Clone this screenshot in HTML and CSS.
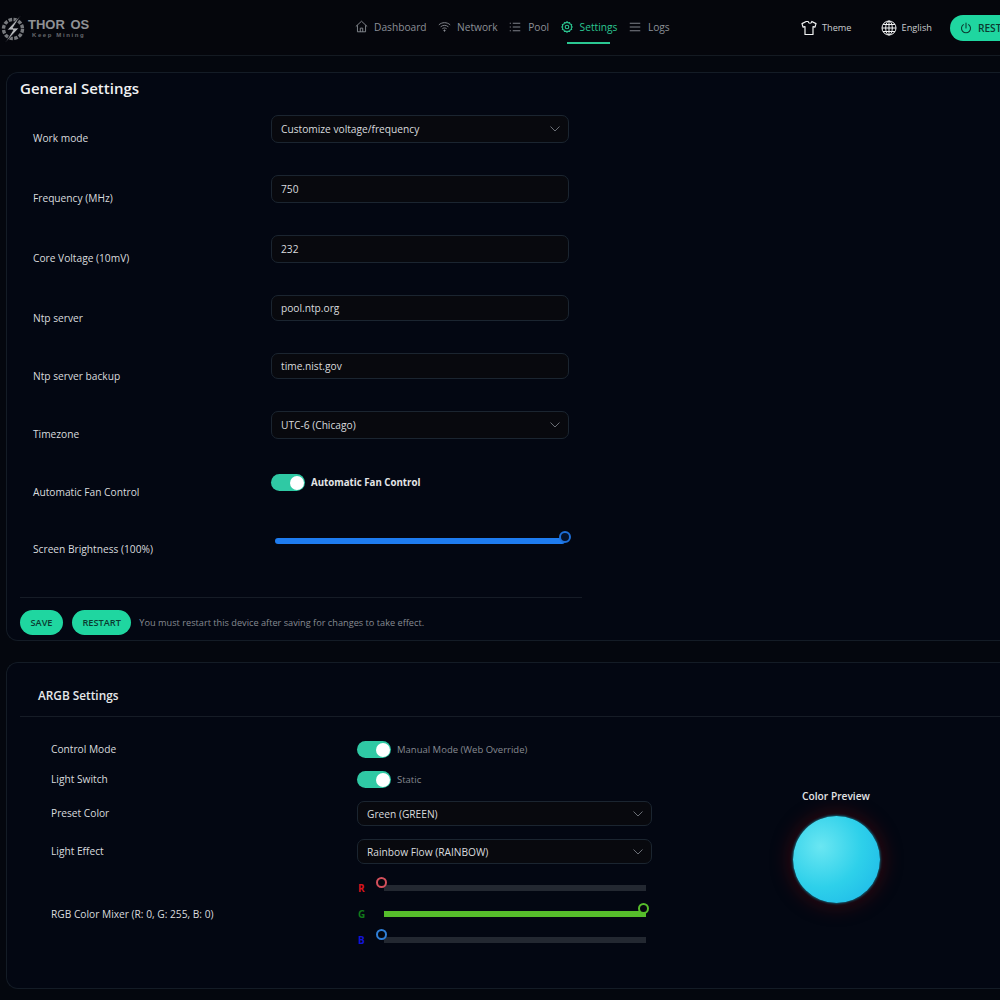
FILE: index.html
```html
<!DOCTYPE html>
<html>
<head>
    <meta charset="utf-8">
    <meta name="viewport" content="width=device-width, initial-scale=1.0">
    <title>Thor OS Settings</title>
    <link rel="stylesheet" href="styles.css">
</head>
<body>
    <header class="topbar">
        <div class="logo">
            <svg class="logo-mark" viewBox="0 0 26 28" width="26" height="28" fill="none">
                <circle cx="13" cy="14" r="9.500" stroke="#77797d" stroke-width="3.400" stroke-dasharray="3.600 1.400"/>
                <path d="M21 0 7 15h6L5 28l14-15h-6z" fill="#b4b6b9" stroke="#05060c" stroke-width=".8"/>
            </svg>
            <div class="logo-text">
                <span class="logo-name">THOR OS</span>
                <span class="logo-sub">Keep Mining</span>
            </div>
        </div>
        <nav class="nav">
            <a class="nav-item">
                <svg viewBox="0 0 16 16" width="13" height="13" fill="none" stroke="currentColor" stroke-width="1.100"><path d="M1 8 8 1.500 15 8M3 6.500V14.500H13V6.500M6.500 14.500V10H9.500V14.500"/></svg>
                Dashboard
            </a>
            <a class="nav-item">
                <svg viewBox="0 0 16 16" width="13" height="13" fill="none" stroke="currentColor" stroke-width="1.100"><path d="M1 6c4-3.600 10-3.600 14 0M3.200 8.400c2.800-2.400 6.800-2.400 9.600 0M5.400 10.700c1.500-1.200 3.700-1.200 5.200 0"/><circle cx="8" cy="13" r=".8" fill="currentColor"/></svg>
                Network
            </a>
            <a class="nav-item wide-gap">
                <svg viewBox="0 0 16 16" width="12" height="12" fill="none" stroke="currentColor" stroke-width="1.200"><path d="M5 3h10M5 8h10M5 13h10M1 3h1.500M1 8h1.500M1 13h1.500"/></svg>
                Pool
            </a>
            <a class="nav-item wide-gap active">
                <svg viewBox="0 0 16 16" width="12" height="12" fill="none" stroke="currentColor" stroke-width="1.500"><path d="M8 1l1.400 1.500 2-.4.7 2 2 .6-.4 2L15 8l-1.300 1.300.4 2-2 .6-.7 2-2-.4L8 15l-1.400-1.500-2 .4-.7-2-2-.6.4-2L1 8l1.300-1.300-.4-2 2-.6.7-2 2 .4z"/><circle cx="8" cy="8" r="2.400"/></svg>
                Settings
            </a>
            <a class="nav-item wide-gap">
                <svg viewBox="0 0 16 16" width="12" height="12" fill="none" stroke="currentColor" stroke-width="1.200"><path d="M1 3h14M1 8h14M1 13h14"/></svg>
                Logs
            </a>
        </nav>
        <div class="top-actions">
            <a class="top-link">
                <svg viewBox="0 0 16 16" width="16" height="16" fill="none" stroke="#f2f3f4" stroke-width="1.200" stroke-linejoin="round"><path d="M5.200 1.500 1 3.600 2 7.200l2-.5v7.800h8V6.700l2 .5 1-3.600-4.200-2.100c-.3 2.300-3.300 2.300-3.600 0z"/></svg>
                Theme
            </a>
            <a class="top-link">
                <svg viewBox="0 0 16 16" width="16" height="16" fill="none" stroke="#f2f3f4" stroke-width="1"><circle cx="8" cy="8" r="7"/><ellipse cx="8" cy="8" rx="3.300" ry="7"/><path d="M8 1v14M1 8h14M2 4.500h12M2 11.500h12"/></svg>
                English
            </a>
            <button class="restart-top">
                <svg viewBox="0 0 16 16" width="12" height="12" fill="none" stroke="currentColor" stroke-width="1.400" stroke-linecap="round"><path d="M8 1.500V8M4.500 3.500a6 6 0 1 0 7 0"/></svg>
                RESTART
            </button>
        </div>
    </header>

    <section class="card general">
        <h2>General Settings</h2>
        <div class="form">
            <div class="form-row">
                <label>Work mode</label>
                <div class="select">Customize voltage/frequency<svg class="chev" viewBox="0 0 10 6" width="10" height="6"><path d="M.5.500 5 5 9.500.500"/></svg></div>
            </div>
            <div class="form-row">
                <label>Frequency (MHz)</label>
                <div class="input">750</div>
            </div>
            <div class="form-row">
                <label>Core Voltage (10mV)</label>
                <div class="input">232</div>
            </div>
            <div class="form-row">
                <label>Ntp server</label>
                <div class="input short">pool.ntp.org</div>
            </div>
            <div class="form-row">
                <label>Ntp server backup</label>
                <div class="input short">time.nist.gov</div>
            </div>
            <div class="form-row">
                <label>Timezone</label>
                <div class="select">UTC-6 (Chicago)<svg class="chev" viewBox="0 0 10 6" width="10" height="6"><path d="M.5.500 5 5 9.500.500"/></svg></div>
            </div>
            <div class="form-row fan-row">
                <label>Automatic Fan Control</label>
                <div class="toggle-wrap">
                    <span class="toggle"></span>
                    <strong>Automatic Fan Control</strong>
                </div>
            </div>
            <div class="form-row brightness-row">
                <label>Screen Brightness (100%)</label>
                <div class="slider blue">
                    <span class="thumb"></span>
                </div>
            </div>
        </div>
        <div class="actions">
            <button class="btn">SAVE</button>
            <button class="btn">RESTART</button>
            <span class="note">You must restart this device after saving for changes to take effect.</span>
        </div>
    </section>

    <section class="card argb">
        <h3>ARGB Settings</h3>
        <div class="argb-body">
            <div class="argb-form">
                <div class="argb-row">
                    <label>Control Mode</label>
                    <div class="toggle-wrap">
                        <span class="toggle"></span>
                        <span class="toggle-text">Manual Mode (Web Override)</span>
                    </div>
                </div>
                <div class="argb-row">
                    <label>Light Switch</label>
                    <div class="toggle-wrap">
                        <span class="toggle"></span>
                        <span class="toggle-text">Static</span>
                    </div>
                </div>
                <div class="argb-row">
                    <label>Preset Color</label>
                    <div class="select small">Green (GREEN)<svg class="chev" viewBox="0 0 10 6" width="10" height="6"><path d="M.5.500 5 5 9.500.500"/></svg></div>
                </div>
                <div class="argb-row">
                    <label>Light Effect</label>
                    <div class="select small">Rainbow Flow (RAINBOW)<svg class="chev" viewBox="0 0 10 6" width="10" height="6"><path d="M.5.500 5 5 9.500.500"/></svg></div>
                </div>
                <div class="argb-row">
                    <label class="mixer-label">RGB Color Mixer (R: 0, G: 255, B: 0)</label>
                    <div class="mixer">
                        <div class="mix-row">
                            <b class="r">R</b>
                            <div class="mix-track"><span class="mix-thumb t-r"></span></div>
                        </div>
                        <div class="mix-row">
                            <b class="g">G</b>
                            <div class="mix-track full"><span class="mix-thumb t-g"></span></div>
                        </div>
                        <div class="mix-row">
                            <b class="b">B</b>
                            <div class="mix-track"><span class="mix-thumb t-b"></span></div>
                        </div>
                    </div>
                </div>
            </div>
            <div class="preview">
                <div class="preview-title">Color Preview</div>
                <div class="orb"></div>
            </div>
        </div>
    </section>
</body>
</html>
```

FILE: styles.css
```css
* {
    box-sizing: border-box;
    margin: 0;
    padding: 0;
}
html, body {
    height: 1000px;
    overflow: hidden;
}
body {
    width: 1040px;
    background: #04070e;
    color: #d9dbde;
    font-family: "Open Sans", "Noto Sans", sans-serif;
    font-size: 10.200px;
}
.topbar {
    height: 56px;
    display: flex;
    align-items: center;
    background: #05060c;
    border-bottom: 1px solid #141a22;
}
.logo {
    width: 341px;
    display: flex;
    align-items: center;
    gap: 2px;
    flex-shrink: 0;
    padding-top: 2px;
}
.logo-text {
    display: flex;
    flex-direction: column;
    align-items: center;
    font-family: "Liberation Sans", sans-serif;
    color: #8f9194;
}
.logo-name {
    font-size: 13px;
    line-height: 14px;
    font-weight: 700;
    word-spacing: 2px;
}
.logo-sub {
    font-size: 6px;
    line-height: 7px;
    font-weight: 700;
    letter-spacing: 1.600px;
    color: #66686c;
}
.nav {
    display: flex;
    width: 460px;
    gap: 11.500px;
    flex-shrink: 0;
    padding-left: 14px;
    margin-top: -2px;
}
.nav-item {
    position: relative;
    display: flex;
    align-items: center;
    gap: 6px;
    color: #8c9097;
    height: 20px;
}
.nav-item.wide-gap {
    gap: 7px;
}
.nav-item.active {
    color: #2bc792;
}
.nav-item.active::after {
    content: "";
    position: absolute;
    left: 6px;
    right: 7px;
    bottom: -7px;
    height: 2px;
    background: #2bc792;
}
.top-actions {
    display: flex;
    align-items: center;
    font-size: 9.200px;
}
.top-link {
    display: flex;
    align-items: center;
    gap: 5px;
    color: #c9cbce;
    margin-right: 29px;
}
.top-link + .top-link {
    margin-right: 18px;
}
.restart-top {
    display: flex;
    align-items: center;
    gap: 6px;
    height: 26px;
    padding: 0 14px 0 10px;
    border: none;
    border-radius: 13px;
    background: #1fd6a0;
    color: #0b3a30;
    font: inherit;
    font-size: 10.200px;
    font-weight: 600;
}
.card {
    margin-left: 6px;
    border: 1px solid #141c26;
    border-right: none;
    border-radius: 12px 0 0 12px;
    background: #030712;
}
.general {
    margin-top: 16px;
    height: 569px;
    padding: 0 13px;
}
.general h2 {
    font-size: 15px;
    font-weight: 600;
    line-height: 22px;
    margin-top: 4px;
    color: #f0f1f3;
}
.form {
    display: flex;
    flex-direction: column;
    gap: 32px;
    margin-top: 16px;
    padding-left: 13px;
}
.form-row {
    display: flex;
    align-items: flex-start;
}
.form-row label {
    width: 238px;
    height: 0;
    flex-shrink: 0;
    margin-top: 15px;
    line-height: 16px;
}
.input, .select {
    width: 298px;
    height: 28px;
    display: flex;
    align-items: center;
    justify-content: space-between;
    padding: 0 8px 0 9px;
    border: 1px solid #1b2530;
    border-radius: 7px;
    background: #08090e;
    color: #d9dbde;
}
.input.short {
    height: 26px;
}
.chev {
    fill: none;
    stroke: #6a6e75;
    stroke-width: 1;
}
.fan-row {
    height: 20px;
    padding-top: 3px;
}
.fan-row label {
    margin-top: 10px;
}
.toggle-wrap {
    display: flex;
    align-items: center;
    gap: 6px;
}
.toggle-wrap strong {
    font-size: 9.700px;
    font-weight: 700;
    color: #e3e5e7;
}
.toggle {
    position: relative;
    width: 34px;
    height: 17px;
    border-radius: 9px;
    background: #2fc9a4;
}
.toggle::after {
    content: "";
    position: absolute;
    right: 1.500px;
    top: 1.500px;
    width: 14px;
    height: 14px;
    border-radius: 50%;
    background: #fff;
}
.brightness-row label {
    margin-top: 18px;
}
.slider {
    position: relative;
    width: 290px;
    height: 6px;
    margin: 15px 0 0 4px;
    border-radius: 3px;
    background: #1e7cf0;
}
.thumb {
    position: absolute;
    right: -5.500px;
    top: -7px;
    width: 12px;
    height: 12px;
    border: 2px solid #1e6fd8;
    border-radius: 50%;
    background: #04122b;
}
.actions {
    display: flex;
    align-items: center;
    gap: 9px;
    width: 562px;
    margin-top: 53px;
    padding-top: 12px;
    border-top: 1px solid #161c26;
}
.btn {
    height: 25px;
    padding: 0 10.500px;
    border: none;
    border-radius: 13px;
    background: #1fd6a0;
    color: #0b3a30;
    font: inherit;
    font-size: 9.200px;
    font-weight: 600;
}
.note {
    margin-left: -1px;
    font-size: 9.200px;
    color: #868a91;
}
.argb {
    margin-top: 21px;
    height: 327px;
    padding: 0 13px;
}
.argb h3 {
    height: 54px;
    padding: 23px 0 0 18px;
    font-size: 11.800px;
    line-height: 18px;
    font-weight: 600;
    color: #e6e8ea;
    border-bottom: 1px solid #161c26;
}
.argb-body {
    display: flex;
    padding: 24px 0 0 31px;
}
.argb-form {
    width: 601px;
    flex-shrink: 0;
    display: flex;
    flex-direction: column;
}
.argb-row {
    display: flex;
    align-items: center;
    margin-bottom: 13px;
}
.argb-row label {
    width: 306px;
    flex-shrink: 0;
    margin-top: -1px;
}
.argb-row .mixer-label {
    padding-top: 8px;
}
.select.small {
    width: 295px;
    height: 25px;
}
.toggle-text {
    font-size: 9.500px;
    color: #868a91;
}
.mixer {
    display: flex;
    flex-direction: column;
    gap: 20px;
    padding-top: 8px;
}
.mix-row {
    display: flex;
    align-items: center;
    height: 6px;
}
.mix-row b {
    width: 27px;
    padding-left: 1px;
    font-size: 10px;
}
.r { color: #d8141c; }
.g { color: #127a1a; }
.b { color: #1414d8; }
.mix-track {
    position: relative;
    width: 262px;
    height: 6px;
    background: #232831;
}
.mix-track.full {
    background: #56bd2b;
}
.mix-thumb {
    position: absolute;
    left: -8px;
    top: -8.500px;
    width: 11px;
    height: 11px;
    border: 2px solid;
    border-radius: 50%;
    background: #04070e;
}
.t-r { border-color: #d4505c; }
.t-g { border-color: #56bd2b; left: auto; right: -3px; }
.t-b { border-color: #2f7fd8; }
.preview {
    width: 172px;
    margin-left: 98px;
    display: flex;
    flex-direction: column;
    align-items: center;
    padding-top: 48px;
}
.preview-title {
    font-weight: 600;
    color: #e3e5e7;
    line-height: 14px;
}
.orb {
    width: 87px;
    height: 87px;
    margin-top: 13px;
    border-radius: 50%;
    background: radial-gradient(circle at 32% 35%, #6ae6f2, #2ed0ea 50%, #1ab4e8);
    box-shadow: 0 0 2px 1px #0e5568, 0 0 18px 5px rgba(120, 12, 12, .35);
}
```
